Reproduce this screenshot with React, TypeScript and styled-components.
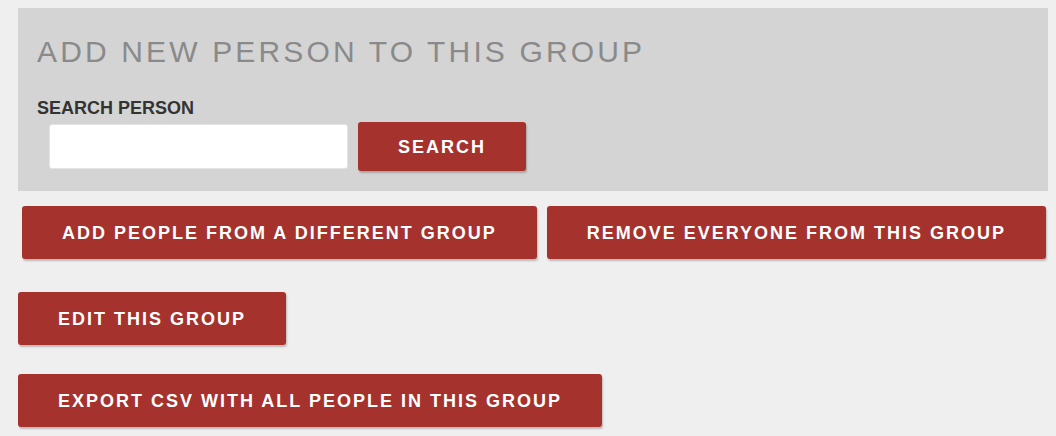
import React from "react";
import styled, { createGlobalStyle } from "styled-components";

const GlobalStyle = createGlobalStyle`
  html, body {
    margin: 0;
    padding: 0;
    background: #efefef;
  }
  body {
    font-family: "Liberation Sans", Arial, Helvetica, sans-serif;
  }
  * { box-sizing: border-box; }
`;

const Page = styled.div`
  padding: 8px 8px 8px 18px;
  display: flex;
  flex-direction: column;
  align-items: flex-start;
`;

const Panel = styled.section`
  align-self: stretch;
  background: #d4d4d4;
  padding: 29px 19px 20px 19px;
  display: flex;
  flex-direction: column;
`;

const Title = styled.h2`
  margin: 0;
  font-size: 30px;
  line-height: 30px;
  font-weight: 400;
  letter-spacing: 3.15px;
  color: #8a8a8a;
  text-transform: uppercase;
`;

const Label = styled.label`
  margin-top: 32px;
  font-size: 18px;
  line-height: 18px;
  font-weight: 700;
  color: #333333;
  text-transform: uppercase;
`;

const SearchRow = styled.div`
  display: flex;
  align-items: center;
  gap: 10px;
  margin: 5px 0 0 12px;
`;

const SearchInput = styled.input`
  width: 299px;
  height: 45px;
  border: 1px solid #e4e4e4;
  border-radius: 3px;
  background: #ffffff;
  padding: 0 10px;
  font-size: 16px;
  font-family: inherit;
  outline: none;
`;

const Button = styled.button<{ $height?: number }>`
  display: inline-flex;
  align-items: center;
  justify-content: center;
  height: ${(p) => p.$height ?? 53}px;
  padding: 2px 40px 0;
  border: none;
  border-radius: 3px;
  background: #a5322d;
  color: #ffffff;
  font-family: "Liberation Sans", Arial, Helvetica, sans-serif;
  font-size: 18px;
  font-weight: 700;
  letter-spacing: 2px;
  text-transform: uppercase;
  white-space: nowrap;
  box-shadow: 1px 2px 2px rgba(0, 0, 0, 0.22);
  cursor: pointer;
`;

const ButtonRow = styled.div<{ $top: number; $indent?: number }>`
  display: flex;
  gap: 10px;
  margin-top: ${(p) => p.$top}px;
  margin-left: ${(p) => p.$indent ?? 0}px;
`;

export default function App() {
  return (
    <>
      <GlobalStyle />
      <Page>
        <Panel>
          <Title>Add new person to this group</Title>
          <Label htmlFor="person-search">Search person</Label>
          <SearchRow>
            <SearchInput id="person-search" type="text" />
            <Button $height={49}>Search</Button>
          </SearchRow>
        </Panel>
        <ButtonRow $top={15} $indent={4}>
          <Button>Add people from a different group</Button>
          <Button>Remove everyone from this group</Button>
        </ButtonRow>
        <ButtonRow $top={33}>
          <Button>Edit this group</Button>
        </ButtonRow>
        <ButtonRow $top={29}>
          <Button>Export CSV with all people in this group</Button>
        </ButtonRow>
      </Page>
    </>
  );
}
